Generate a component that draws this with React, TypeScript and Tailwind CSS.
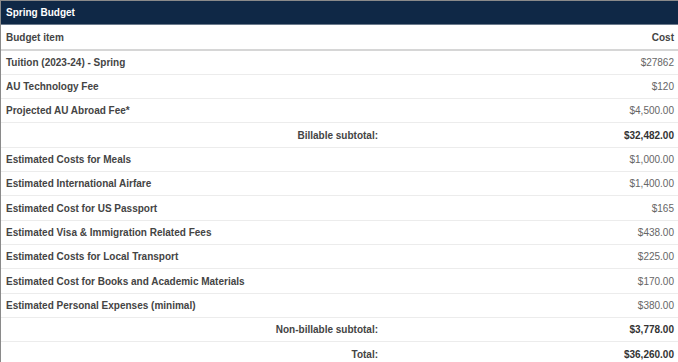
import React from "react";

type Row = { item: string; cost: string; kind?: "item" | "subtotal" };

const rows: Row[] = [
  { item: "Tuition (2023-24) - Spring", cost: "$27862" },
  { item: "AU Technology Fee", cost: "$120" },
  { item: "Projected AU Abroad Fee*", cost: "$4,500.00" },
  { item: "Billable subtotal:", cost: "$32,482.00", kind: "subtotal" },
  { item: "Estimated Costs for Meals", cost: "$1,000.00" },
  { item: "Estimated International Airfare", cost: "$1,400.00" },
  { item: "Estimated Cost for US Passport", cost: "$165" },
  { item: "Estimated Visa & Immigration Related Fees", cost: "$438.00" },
  { item: "Estimated Costs for Local Transport", cost: "$225.00" },
  { item: "Estimated Cost for Books and Academic Materials", cost: "$170.00" },
  { item: "Estimated Personal Expenses (minimal)", cost: "$380.00" },
  { item: "Non-billable subtotal:", cost: "$3,778.00", kind: "subtotal" },
  { item: "Total:", cost: "$36,260.00", kind: "subtotal" },
];

export default function App() {
  return (
    <div
      className="w-[678px] h-[362px] overflow-hidden bg-white border-l border-t border-[#8a8a8a] text-[10px]"
      style={{ fontFamily: '"Liberation Sans", Arial, sans-serif' }}
    >
      {/* Title bar */}
      <div className="h-[24px] bg-[#0f2846] border-b border-[#6b7a8c] flex items-center px-[5px] font-bold text-white text-[10px]">
        Spring Budget
      </div>

      <table className="w-full border-collapse">
        <thead>
          <tr className="h-[25px] border-b-2 border-[#d6d6d6]">
            <th className="w-[384px] text-left font-bold text-[#444] px-[5px]">Budget item</th>
            <th className="text-right font-bold text-[#444] px-[4px]">Cost</th>
          </tr>
        </thead>
        <tbody>
          {rows.map((r) =>
            r.kind === "subtotal" ? (
              <tr key={r.item} className="h-[24.33px] border-b border-[#ececec]">
                <td className="text-right font-bold text-[#444] pr-[7px]">{r.item}</td>
                <td className="text-right font-bold text-[#333] px-[4px]">{r.cost}</td>
              </tr>
            ) : (
              <tr key={r.item} className="h-[24.33px] border-b border-[#ececec]">
                <td className="text-left font-bold text-[#444] px-[5px]">{r.item}</td>
                <td className="text-right text-[#666] px-[4px]">{r.cost}</td>
              </tr>
            )
          )}
        </tbody>
      </table>
    </div>
  );
}
